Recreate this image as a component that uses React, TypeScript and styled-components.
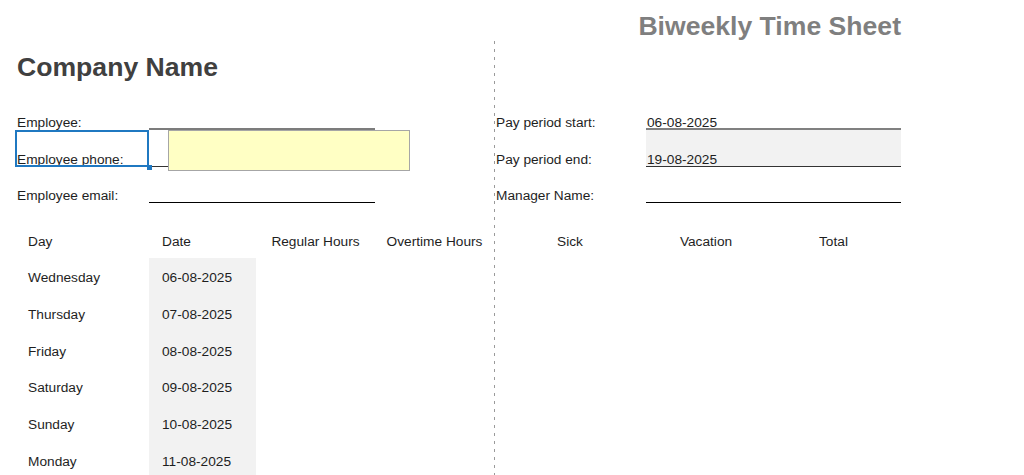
import React from "react";
import styled, { createGlobalStyle } from "styled-components";

const Global = createGlobalStyle`
  html, body { margin: 0; padding: 0; background: #ffffff; }
  body {
    font-family: "Liberation Sans", Arial, sans-serif;
    font-size: 13.7px;
    color: #1e1e1e;
    overflow: hidden;
  }
`;

const COLS = "134px 107px 119px 119px 152px 120px 135px";
const ROW_H = 36.67;

const Sheet = styled.div`
  position: relative;
  box-sizing: border-box;
  width: 1024px;
  height: 475px;
  padding-left: 15px;
  overflow: hidden;
`;

const Row = styled.div<{ $h: number }>`
  display: grid;
  grid-template-columns: ${COLS};
  height: ${(p) => p.$h}px;
`;

const Title = styled.div`
  grid-column: 5 / 8;
  text-align: right;
  padding-top: 11px;
  font-size: 26.6px;
  line-height: 30px;
  font-weight: 700;
  color: #7f7f7f;
  white-space: nowrap;
`;

const Company = styled.div`
  grid-column: 1 / 4;
  padding: 11px 0 0 2px;
  font-size: 26.6px;
  line-height: 30px;
  font-weight: 700;
  color: #404040;
  white-space: nowrap;
`;

const FormLabel = styled.div<{ $selected?: boolean }>`
  position: relative;
  display: flex;
  align-items: flex-end;
  padding-left: 2px;
  line-height: 14px;
  white-space: nowrap;
  ${(p) =>
    p.$selected &&
    `
    &::after {
      content: "";
      position: absolute;
      inset: 0;
      border: 2px solid #1f78c1;
      pointer-events: none;
    }
    &::before {
      content: "";
      position: absolute;
      right: -3px;
      bottom: -3px;
      width: 5px;
      height: 5px;
      background: #1f78c1;
      z-index: 2;
    }
  `}
`;

const FormValue = styled.div<{ $span: string; $line: string; $weight: number; $shade?: boolean }>`
  grid-column: ${(p) => p.$span};
  display: flex;
  align-items: flex-end;
  padding-left: 1px;
  line-height: 14px;
  box-shadow: inset 0 -${(p) => p.$weight}px 0 ${(p) => p.$line};
  background: ${(p) => (p.$shade ? "#f2f2f2" : "transparent")};
  white-space: nowrap;
`;

const Spacer = styled.div`
  height: 18px;
`;

const Cell = styled.div<{ $align?: "left" | "center"; $shade?: boolean }>`
  display: flex;
  align-items: center;
  justify-content: ${(p) => (p.$align === "center" ? "center" : "flex-start")};
  padding: 4px 0 0 ${(p) => (p.$align === "center" ? "0" : "13px")};
  line-height: 16px;
  white-space: nowrap;
  background: ${(p) => (p.$shade ? "#f2f2f2" : "transparent")};
`;

const PageBreak = styled.div`
  position: absolute;
  left: 494px;
  top: 41px;
  bottom: 0;
  width: 1px;
  background: repeating-linear-gradient(to bottom, #9a9a9a 0 3px, transparent 3px 8px);
`;

const InputMessage = styled.div`
  position: absolute;
  left: 168px;
  top: 130px;
  width: 242px;
  height: 41px;
  box-sizing: border-box;
  background: #ffffc4;
  border: 1px solid #a6a6a6;
  z-index: 3;
`;

const days = [
  ["Wednesday", "06-08-2025"],
  ["Thursday", "07-08-2025"],
  ["Friday", "08-08-2025"],
  ["Saturday", "09-08-2025"],
  ["Sunday", "10-08-2025"],
  ["Monday", "11-08-2025"],
];

const headers = ["Regular Hours", "Overtime Hours", "Sick", "Vacation", "Total"];

export default function App() {
  return (
    <>
      <Global />
      <Sheet>
        <Row $h={41}>
          <Title>Biweekly Time Sheet</Title>
        </Row>
        <Row $h={52.33}>
          <Company>Company Name</Company>
        </Row>

        <Row $h={ROW_H}>
          <FormLabel>Employee:</FormLabel>
          <FormValue $span="2 / 4" $line="#7c7c7c" $weight={2} />
          <div />
          <FormLabel>Pay period start:</FormLabel>
          <FormValue $span="6 / 8" $line="#808080" $weight={2}>
            06-08-2025
          </FormValue>
        </Row>
        <Row $h={ROW_H}>
          <FormLabel $selected>Employee phone:</FormLabel>
          <FormValue $span="2 / 4" $line="#333333" $weight={1} />
          <div />
          <FormLabel>Pay period end:</FormLabel>
          <FormValue $span="6 / 8" $line="#333333" $weight={1} $shade>
            19-08-2025
          </FormValue>
        </Row>
        <Row $h={ROW_H}>
          <FormLabel>Employee email:</FormLabel>
          <FormValue $span="2 / 4" $line="#000000" $weight={1} />
          <div />
          <FormLabel>Manager Name:</FormLabel>
          <FormValue $span="6 / 8" $line="#000000" $weight={1} />
        </Row>

        <Spacer />
        <Row $h={ROW_H}>
          <Cell>Day</Cell>
          <Cell>Date</Cell>
          {headers.map((h) => (
            <Cell key={h} $align="center">
              {h}
            </Cell>
          ))}
        </Row>
        {days.map(([d, date], i) => (
          <Row key={i} $h={ROW_H}>
            <Cell>{d}</Cell>
            <Cell $shade>{date}</Cell>
          </Row>
        ))}

        <PageBreak />
        <InputMessage />
      </Sheet>
    </>
  );
}
